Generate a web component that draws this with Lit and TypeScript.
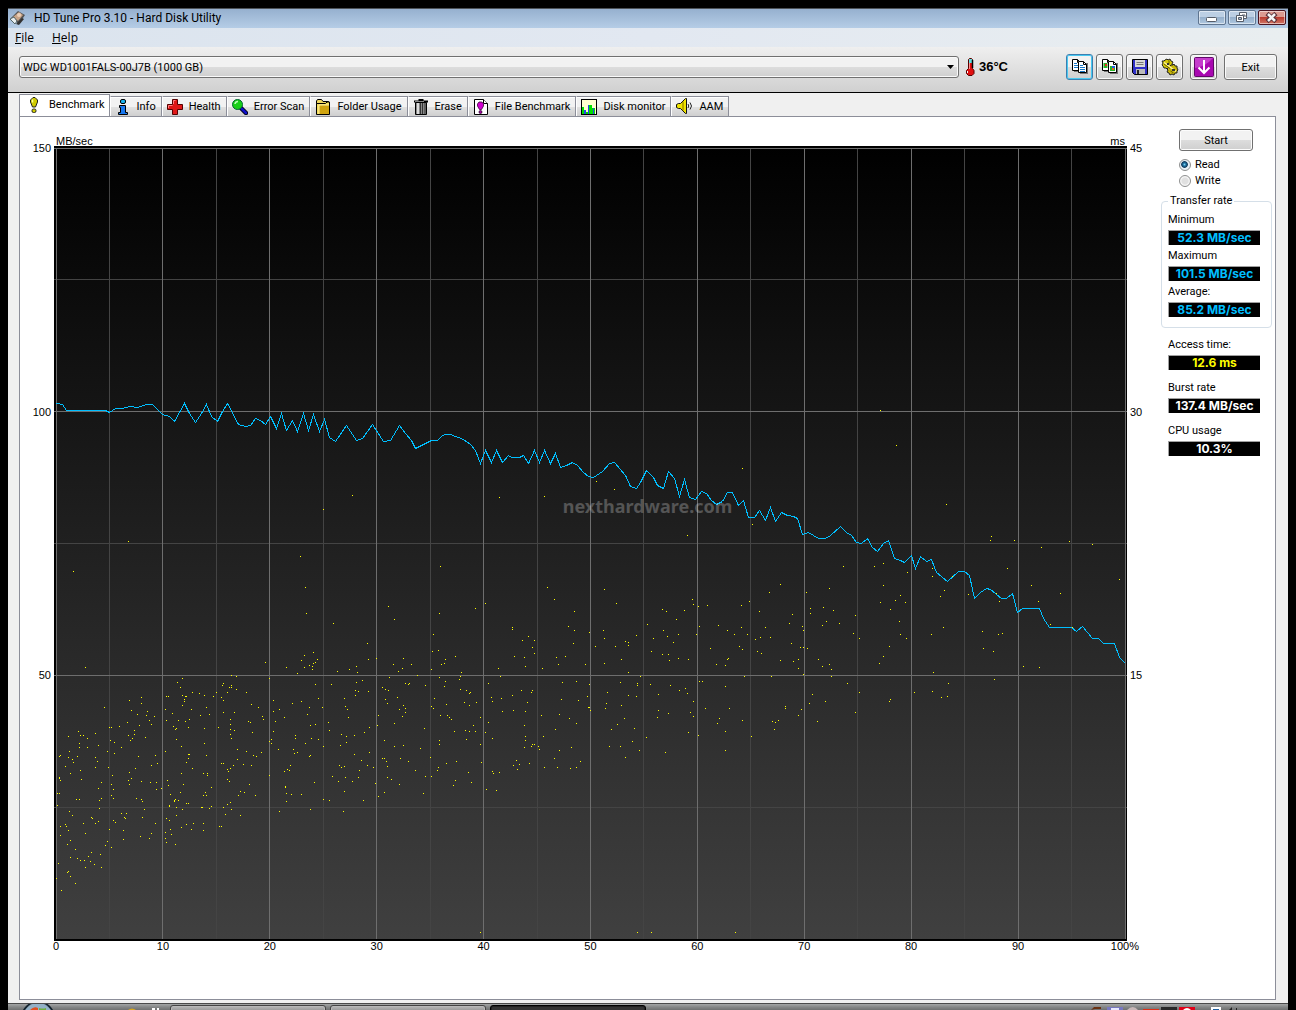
import { LitElement, html, svg, css, nothing } from "lit";
import { customElement, state } from "lit/decorators.js";
import { classMap } from "lit/directives/class-map.js";

/* ------------------------------------------------------------------ data */

type Block = { x: number; y: number; points: string };

// Samples are packed per block: an origin plus offsets in thirds of a unit.
const unpack = (blocks: Block[]): [number, number][] =>
  blocks.flatMap(({ x, y, points }) =>
    points
      .trim()
      .split(/\s+/)
      .map((pair) => {
        const [dx, dy] = pair.split(",").map(Number);
        return [x + Math.floor(dx / 3), y + Math.floor(dy / 3)] as [number, number];
      })
  );

const TRANSFER = unpack([
  {
    x: 40,
    y: 380,
    points: `48,70 66,74 80,91 197,91 208,97 225,86 245,86 272,79 292,82 318,73 338,73 368,104 387,110 404,124
      433,70 447,100 467,127 485,100 500,73 515,110 532,123 547,95 563,70 595,132 615,139 630,135 645,115 660,120
      677,133 692,110 710,146 725,100 740,151 757,121 773,154 790,100 806,151 821,103 838,154 854,119 869,172
      887,184 920,136 950,181 968,175 997,133 1031,184 1050,180 1078,136 1096,161 1113,180 1126,205 1175,181 1193,181`,
  },
  {
    x: 420,
    y: 380,
    points: `68,167 75,163 92,163 130,178 152,192 166,212 182,250 197,211 215,247 230,211
      246,247 264,226 275,232 298,232 310,226 326,250 344,211 359,247 374,211 392,250 407,220 422,262 440,256
      457,247 473,257 490,278 505,290 520,292 548,274 568,250 584,247 615,287 630,318 649,325 662,308 680,271
      700,293 713,316 731,325 746,274 762,294 779,349 794,298 808,351 827,358 843,334 858,340 875,360 890,373
      907,363 922,337 938,337 956,376 971,361 986,412 1004,412 1019,391`,
  },
  {
    x: 760,
    y: 380,
    points: `17,421 32,382 47,424 65,398 83,406 100,410 113,416 128,464 145,457 160,467 175,475 195,475 210,467
      241,439 260,458 275,466 290,488 304,490 323,475 337,502 353,514 370,490 386,482 403,535 420,540 434,547
      453,526 467,566 482,530 500,544 515,538 530,578 563,604 595,574 612,574 628,586 644,656 662,638 680,625
      692,628 725,655 740,655 758,641 772,697 788,685 838,685 850,715 868,742 935,742 949,753 968,739 997,775
      1016,775 1031,790 1063,790 1078,832 1097,850`,
  },
]);

const ACCESS = unpack([
  { x: 40, y: 380, points: `937,346 850,388 265,484 100,574 781,529 796,622 799,700` },
  {
    x: 420,
    y: 380,
    points: `61,559 382,622 403,658 529,304 583,328 238,352 373,349 553,628 802,466 817,658 967,265 997,433 1048,637`,
  },
  {
    x: 760,
    y: 380,
    points: `361,91 409,196 559,373 694,469 691,481 763,481 844,502 928,484 997,493 370,550 343,559 250,559
      442,577 517,565 517,589 577,589 742,565 814,616 1078,598 901,640 709,640 835,664 718,664 871,733 937,742
      715,763 727,760 700,814 703,898 790,859 838,862 61,613 28,637 139,637 208,625 370,616 553,631 541,649
      625,643 421,646`,
  },
  {
    x: 40,
    y: 640,
    points: `136,82 676,67 739,82 772,100 784,61 793,46 793,82 808,76 817,79 820,70 817,88 820,37 826,67 832,58
      193,202 268,181 304,172 304,190 274,211 292,223 322,214 319,226 343,229 328,241 334,253 262,247 298,256
      238,259 208,262 214,262 283,271 283,283 265,286 277,295 271,301 316,292 211,301 223,307 244,322 223,340
      295,349 346,346 352,370 334,376 286,385 268,397 205,382 202,334 172,364 166,352 166,382 175,316 142,322
      166,280 142,295 130,286 121,286 115,274 85,289 118,310 118,322 88,334 112,349 85,352 97,358 100,367 76,379
      58,349 61,346 91,400 121,391 124,418 58,412 58,415 61,421 52,460 58,460 52,496 109,478 118,478 88,514
      97,526 61,559 61,586 76,553 79,559 85,571 91,601 82,613 106,628 91,652 112,655 121,661 133,661 145,649
      154,637 151,664 163,673 181,643 136,682 184,682 55,670 49,715 82,697 85,694 91,709 106,730 64,751 136,580
      130,550 154,532 157,535 166,550 175,544 178,505 178,481 184,475 175,445 184,427 217,406 214,433 220,448
      214,466 220,475 274,415 265,421 268,433 304,424 331,427 349,427 349,448 364,445 289,475 304,478 307,484
      313,508 307,532 346,550 334,580 328,595 301,589 250,598 250,571 259,520 244,520 253,532 256,535 220,541
      226,547 208,568 202,604 196,616 214,622 427,115 412,127 421,142 427,166 436,169 439,169 433,178 433,184
      427,196 379,169 385,169 457,157 478,160 493,166 529,157 520,169 499,202 454,208 376,208 397,220 481,226
      508,223 448,238 436,244 415,241 379,241 400,259 409,265 406,268 445,262 493,265 535,262 409,298 424,319
      493,310 376,334 445,343 448,343 445,355 439,367 499,346 457,385 424,400 490,400 502,400 502,406 382,421
      385,436 430,433 514,442 421,457 391,463 496,457 490,466 499,466 406,478 403,481 403,484 415,481 388,496
      388,499 409,502 439,490 445,490 427,508 484,502 487,502 508,505 514,499 379,535 388,541 409,526 439,553
      460,550 490,550 424,562 454,568 490,571 391,568 376,577 394,583 376,595 379,607 406,613 574,106 589,109
      550,130 547,136 574,136 568,142 574,142 589,148 562,157 619,157 544,172 550,181 550,217 583,217 634,193
      655,202 688,115 571,238 571,253 571,268 571,283 583,271 574,295 625,244 631,247 667,229 670,238 637,277
      592,328 619,334 640,346 649,349 664,337 592,358 544,370 550,370 580,376 571,385 562,388 565,394 610,373
      634,376 562,418 568,424 628,433 688,406 601,454 613,457 595,466 646,466 562,493 571,487 550,502 574,508
      556,523 601,526 538,559 544,559 700,181 700,214 718,208 706,244 733,232 757,190 784,184 808,202 802,223
      826,133 835,175 847,202 826,253 811,256 700,274 694,298 688,304 694,310 715,328 766,286 766,295 796,310
      814,295 835,298 850,319 760,328 763,340 772,337 808,349 811,346 751,376 742,388 748,391 733,394 823,427
      736,439 736,442 739,460 754,463 784,463 739,484 811,508 850,478 868,481 718,514 865,247 868,271`,
  },
  {
    x: 330,
    y: 600,
    points: `10,70 112,130 115,178 79,199 58,208 22,214 82,217 97,241 79,247 4,253 76,271 85,274 76,286 115,274
      43,295 46,319 52,328 55,352 118,382 103,397 34,403 49,409 73,406 49,427 31,436 118,457 73,463 94,481 28,496
      34,502 43,499 112,496 130,502 88,511 7,529 46,532 85,532 25,544 67,544 136,550 43,574 100,601 40,634
      175,19 193,58 139,175 220,175 190,193 244,193 217,205 205,214 262,226 178,232 226,250 235,253 238,250
      286,256 157,262 166,268 175,271 202,292 166,298 172,310 220,316 226,325 208,328 226,337 217,349 145,346
      193,370 142,376 283,385 163,421 193,439 220,436 271,445 157,475 163,475 169,484 211,475 235,484 172,499
      256,511 172,532 184,538 286,529 208,553 163,577 280,580 145,589 436,25 466,10 328,40 310,103 307,154
      325,151 376,169 346,178 343,190 334,193 304,208 394,217 391,229 388,238 328,232 346,244 343,259 391,268
      409,271 421,277 418,280 313,295 403,307 439,307 349,313 418,316 304,319 310,325 331,346 352,346 358,352
      364,358 451,352 430,376 373,394 406,391 418,394 436,394 409,418 328,421 328,433 451,433 301,472 349,490
      379,484 454,487 325,502 322,511 415,517 304,529 376,541 424,547 370,556 547,82 547,88 595,109 577,121
      613,121 607,142 613,160 553,169 583,172 586,199 505,205 511,229 475,250 574,271 607,271 604,277 547,286
      484,292 514,295 487,304 592,307 517,334 550,331 586,334 475,367 583,376 466,397 586,409 487,415 586,421
      583,442 604,439 607,433 613,433 625,439 628,448 559,481 550,496 568,493 598,490 562,508 487,514 490,520
      508,517 469,568 499,571 733,34 715,79 733,91 778,97 730,130 679,172 706,169 685,193 766,193 637,205
      697,247 739,244 778,253 772,289 694,298 745,301 775,322 778,322 781,331 634,346 688,343 718,355 739,370
      676,388 640,409 724,442 688,451 673,475 751,484 643,502 682,502 721,505 739,502 859,10 820,91 823,115
      919,106 796,139 856,139 886,124 895,127 895,136 874,178 823,190 895,217 931,229 871,247 922,250 922,256
      832,277 895,286 919,289 829,310 826,325 874,316 883,355 862,373 844,388 913,385 907,424 838,439 871,439
      928,451 886,472 997,28 1009,34 1063,31 1039,58 952,73 1000,91 1012,109 1045,103 970,115 1030,127 964,154
      997,163 1015,163 1018,181 1045,175 1075,178 961,253 1021,256 1048,271 1066,265 1072,280 985,283 985,331
      1015,340 982,352 949,412 1075,397 1006,457 451,997 922,997 964,997 1216,997`,
  },
  {
    x: 690,
    y: 600,
    points: `10,13 25,19 52,16 154,16 178,4 28,79 85,76 154,82 112,91 19,103 133,103 172,103 61,145 148,139
      157,148 112,178 115,175 79,193 106,196 163,229 28,244 37,244 106,259 10,304 1,337 10,349 46,325 118,325
      88,355 157,361 82,370 106,394 25,406 106,451 208,34 307,43 298,70 226,82 337,79 340,91 211,112 241,112
      196,118 304,130 331,142 340,142 202,154 214,160 271,181 310,184 325,178 325,205 340,223 244,229 286,319
      286,325 334,328 325,346 247,364 256,367 265,361 253,388 184,409 361,25 361,40 400,22 430,31 496,46 409,64
      397,76 448,70 490,100 352,145 385,178 397,199 418,193 424,208 424,229 472,250 367,283 358,310 406,304
      496,337 382,364 571,7 616,1 646,7 601,28 628,64 631,103 649,115 508,115 598,139 580,169 568,190 508,277
      601,298 598,304 760,82 724,103 877,94 880,145 730,217 673,277 727,274 775,250 754,292 772,289`,
  },
]);

const MAJOR_X = [56, 162, 269, 376, 483, 590, 697, 804, 911, 1018, 1125];
const MINOR_X = [109, 216, 323, 430, 537, 643, 750, 857, 964, 1071];
const MAJOR_Y = [148, 411, 675];
const MINOR_Y = [279, 543, 807];
const SPEED_AXIS = ["150", "100", "50", ""];
const TIME_AXIS = ["45", "30", "15", ""];
const POSITION_AXIS = ["0", "10", "20", "30", "40", "50", "60", "70", "80", "90", "100%"];

/* ----------------------------------------------------------------- icons */

const icon = (size: number, body: unknown) =>
  html`<svg width=${size} height=${size} viewBox="0 0 ${size} ${size}" aria-hidden="true">${body}</svg>`;

const bang = icon(16, svg`
  <path d="M7 0.500h2l2.500 2.500v2l-2 5h-3l-2-5v-2z" fill="#d0cc00" stroke="#222" />
  <path d="M6.500 2.500v3" stroke="#ffffa0" stroke-width="1.500" />
  <rect x="6" y="12" width="4" height="3.500" rx="1.500" fill="#d0cc00" stroke="#222" />`);

const info = icon(16, svg`
  <rect x="5.500" y="0.500" width="5" height="4" rx="1.500" fill="#19b4f0" stroke="#000" />
  <path d="M4.500 6.500h6v7h2v2h-9v-2h2v-5h-1z" fill="#1878f0" stroke="#000" />`);

const health = icon(16, svg`
  <path d="M5.500 0.500h5v5h5v5h-5v5h-5v-5h-5v-5h5z" fill="#e01818" stroke="#500" />
  <path d="M6.500 5v-3.500h2M1.500 9v-2.500h4" fill="none" stroke="#ff8080" />`);

const scan = icon(16, svg`
  <path d="M9 9l5 5" stroke="#001" stroke-width="4.500" stroke-linecap="round" />
  <path d="M9.500 9.500l4.500 4.500" stroke="#1010c8" stroke-width="2.500" stroke-linecap="round" />
  <circle cx="5.500" cy="5.500" r="5" fill="#18d018" stroke="#063" />
  <path d="M3 5a3 3 0 0 1 3-2.500" fill="none" stroke="#b8ffb8" stroke-width="1.500" />`);

const folder = icon(16, svg`
  <path d="M1.500 14v-12l1-1.500h4l1.500 2h5.500v2" fill="#f0d860" stroke="#000" />
  <path d="M1.500 15.500v-11h9l1.500-1.500h2.500v12.500z" fill="#f4dc58" stroke="#000" />
  <rect x="4" y="6" width="10" height="9" fill="#d0a410" />
  <path d="M4 15v-9h10" stroke="#fff0a0" fill="none" />`);

const trash = icon(16, svg`
  <path d="M2.500 3.500h11v12h-11z" fill="#888" stroke="#000" />
  <path d="M5 4v11" stroke="#ddd" stroke-width="2" />
  <path d="M7.500 4v11M9.500 4v11M12 4v11" stroke="#333" />
  <path d="M1 2.500h14M5.500 1h5" stroke="#000" stroke-width="2" /><path d="M2 2.500h9" stroke="#888" />`);

const fileBench = icon(16, svg`
  <path d="M1.500 0.500h9l4 4v11h-13z" fill="#fff" stroke="#000" /><path d="M10.500 0.500v4h4" fill="#fff" stroke="#000" />
  <path d="M6 3h3l1.500 2v2l-2 3.500h-2l-2-3.500v-2z" fill="#d000d0" stroke="#400040" stroke-width="0.800" />
  <circle cx="7.500" cy="13" r="1.500" fill="#a000a0" stroke="#300030" stroke-width="0.800" />`);

const monitor = icon(16, svg`
  <rect x="0.500" y="0.500" width="15" height="15" fill="#ffffd0" stroke="#000" />
  <path d="M1 8h2v4h2v1h2v-7h4v3h3v6h-13z" fill="#00e000" />
  <path d="M3 15v-4h2v4zM7 15v-9h1v9zM12 15v-6h1v6z" fill="#2848e8" />`);

const speaker = icon(17, svg`
  <path d="M0.500 6.500l2-1h2l5-5h1v15h-1l-5-5h-2l-2-1z" fill="#f0e400" stroke="#111" />
  <path d="M7 3.500v9" stroke="#806800" />
  <path d="M12 6q1.500 2 0 4M14 4.500q3 3.500 0 7" fill="none" stroke="#222" />`);

const appIcon = icon(16, svg`
  <path d="M1 8l7-7 7 4-6 9z" fill="#555" /><path d="M3 7l6-5 4 3-5 6z" fill="#c8a488" />
  <path d="M0 9l4-2 3 4-2 3z" fill="#e8eef0" stroke="#566" /><path d="M6 14l6-6 2 1-5 6z" fill="#333" />
  <circle cx="9" cy="5" r="2" fill="#ecd0b8" />`);

const thermometer = html`<svg width="10" height="18" viewBox="0 0 10 18" aria-hidden="true">
  <path d="M3.500 1.500l1-1h2l1 1v9l1.500 2v3l-2 2h-3.500l-2-2v-3l2-2z" fill="#e01010" stroke="#500" />
  <path d="M4 1h3v4h-3z" fill="#60e0e0" /><path d="M4.500 5v6" stroke="#ff9090" />
  <path d="M7.500 2v8" stroke="#000" stroke-width="1.500" />
  <path d="M2.500 13v2" stroke="#fff" />
</svg>`;

const page = (x: number, y: number) => svg`
  <path d="M${x + 2} ${y + 2}h8v11h-8z" fill="#777" />
  <path d="M${x}.5 ${y}.5h5l3 3v8h-8z" fill="#fff" stroke="#000" />
  <path d="M${x + 5}.5 ${y}.5v3h3" fill="none" stroke="#000" />`;

const copyText = icon(18, svg`
  ${page(1, 1)}<path d="M3 5.500h3M3 7.500h4M3 9.500h4" stroke="#1878c8" />
  ${page(7, 3)}<path d="M9 7.500h3M9 9.500h5M9 11.500h5M9 13.500h5" stroke="#1878c8" />`);

const copyImage = icon(18, svg`
  ${page(1, 1)}<path d="M2.500 5h4v5h-4z" fill="#28b428" /><path d="M4 6h2v2h-2z" fill="#e03020" />
  ${page(7, 3)}<path d="M9 8h5v5h-5z" fill="#28b428" /><path d="M11 8h3v2h-3z" fill="#2060e0" /><path d="M11 10h2v2h-2z" fill="#f06020" />`);

const save = icon(18, svg`
  <path d="M1.500 1.500h15v15h-13l-2-2z" fill="#3030c8" stroke="#000" />
  <path d="M4 2h10v7h-10z" fill="#d8d8d8" /><path d="M5.500 4.500h7M5.500 6.500h7" stroke="#777" />
  <path d="M5 11h9v5h-9z" fill="#bbb" /><path d="M6 12h2v4h-2z" fill="#222" />`);

const gears = icon(18, svg`
  <path d="M4 2l2-1 1 1 2-1 1 2 2 1-1 2 1 2-2 1v2l-2 0-1 1-2-2-2 0-1-2-1-1 1-2-1-2 2 0z" fill="#d4c808" stroke="#222" />
  <path d="M10 7l2 0 1-1 1 2 2 0 0 2 1 2-1 1 0 2-2 0-1 2-2-1-2 1-1-2-2-1 1-2-1-1 2-2z" fill="#c8b808" stroke="#222" />
  <path d="M3 4.500l12 9" stroke="#fff4a0" stroke-width="1.500" />
  <path d="M3 6l6 4.500M8 2.500v4M9.500 13l3 2" stroke="#6a5e00" />
  <path d="M6 5h2v2h-2zM11 11h3v2h-3z" fill="#333" />`);

const download = icon(20, svg`
  <rect x="0.500" y="0.500" width="19" height="19" rx="1" fill="#a808b0" stroke="#600868" />
  <path d="M1 1h18q-8 9-18 10z" fill="#d860e0" opacity="0.600" />
  <path d="M10 3v13M4.500 10.500l5.500 5.500 5.500-5.500" fill="none" stroke="#fff" stroke-width="2" />`);

const minimizeGlyph = html`<svg width="26" height="13" viewBox="0 0 26 13" aria-hidden="true">
  <rect x="7.500" y="6.500" width="10" height="4" rx="1" fill="#fff" stroke="#555c68" /></svg>`;
const restoreGlyph = html`<svg width="26" height="13" viewBox="0 0 26 13" aria-hidden="true">
  <path d="M10.500 1.500h7v6h-7z" fill="#fff" stroke="#555c68" /><path d="M13 4h3v2" fill="none" stroke="#555c68" />
  <path d="M7.500 4.500h7v6h-7z" fill="#fff" stroke="#555c68" /><path d="M9.500 6.500h3v2h-3z" fill="#a8bfd8" stroke="#555c68" /></svg>`;
const closeGlyph = html`<svg width="26" height="13" viewBox="0 0 26 13" aria-hidden="true">
  <path d="M8 2.500l9 8M17 2.500l-9 8" stroke="#5a3038" stroke-width="4.500" />
  <path d="M9 3l7 7M16 3l-7 7" stroke="#f4f4f4" stroke-width="2.500" /></svg>`;

const TABS: { name: string; glyph: unknown }[] = [
  { name: "Benchmark", glyph: bang },
  { name: "Info", glyph: info },
  { name: "Health", glyph: health },
  { name: "Error Scan", glyph: scan },
  { name: "Folder Usage", glyph: folder },
  { name: "Erase", glyph: trash },
  { name: "File Benchmark", glyph: fileBench },
  { name: "Disk monitor", glyph: monitor },
  { name: "AAM", glyph: speaker },
];

/* ----------------------------------------------------------------- chart */

@customElement("benchmark-chart")
export class BenchmarkChart extends LitElement {
  static styles = css`
    :host {
      display: grid;
      grid-template-columns: 34px minmax(0, 1fr) 34px;
      grid-template-rows: 29px minmax(0, 1fr) 58px;
      font: 11px/14px "Liberation Sans", Arial, sans-serif;
      color: #000;
    }
    .units {
      grid-column: 2;
      display: flex;
      justify-content: space-between;
      align-items: flex-end;
      padding: 0 2px;
      margin-bottom: -2px;
      z-index: 1;
    }
    .scale {
      grid-row: 2;
      display: flex;
      flex-direction: column;
      justify-content: space-between;
      margin: -5px 3px;
    }
    .scale span {
      height: 14px;
    }
    .speed {
      grid-column: 1;
      text-align: right;
    }
    .time {
      grid-column: 3;
    }
    .plot {
      grid-column: 2;
      grid-row: 2;
      position: relative;
      background: linear-gradient(#000, #404040);
    }
    .drawing {
      position: absolute;
      inset: 0;
      width: 100%;
      height: 100%;
      shape-rendering: crispEdges;
    }
    .minor,
    .major,
    .transfer {
      fill: none;
      vector-effect: non-scaling-stroke;
    }
    .minor {
      stroke: #444;
    }
    .major {
      stroke: #6e6e6e;
    }
    .edge {
      fill: #000;
    }
    .transfer {
      stroke: #00bfff;
    }
    .access {
      fill: #ff0;
    }
    .watermark {
      position: absolute;
      left: 0;
      right: 0;
      top: 44%;
      padding-left: 114px;
      text-align: center;
      font: bold 18px/20px "Noto Sans", "Open Sans", sans-serif;
      color: rgb(255 255 255 / 25%);
    }
    .positions {
      grid-column: 2;
      grid-row: 3;
      display: flex;
      justify-content: space-between;
      margin: -2px -18px 0;
    }
    .positions span {
      width: 40px;
      text-align: center;
    }
  `;

  render() {
    const vertical = (xs: number[]) => xs.map((x) => `M${x}.5 148V941`).join("");
    const horizontal = (ys: number[]) => ys.map((y) => `M54 ${y}.5H1127`).join("");
    const transfer = "M" + TRANSFER.map(([x, y]) => `${x + 0.5} ${y + 0.5}`).join("L");
    const access = ACCESS.map(([x, y]) => `M${x} ${y}h1v1h-1z`).join("");
    return html`
      <div class="units"><span>MB/sec</span><span>ms</span></div>
      <div class="scale speed">${SPEED_AXIS.map((t) => html`<span>${t}</span>`)}</div>
      <div class="plot">
        <svg class="drawing" viewBox="54 146 1073 795" preserveAspectRatio="none" role="img"
          aria-label="Transfer rate and access time">
          <path class="edge" d="M54 146h1073v795h-1073zM56 148v791h1070v-791z" fill-rule="evenodd" />
          <path class="minor" d=${vertical(MINOR_X) + horizontal(MINOR_Y)} />
          <path class="major" d=${vertical(MAJOR_X) + horizontal(MAJOR_Y)} />
          <path class="edge" d="M56 939h1070v2h-1070z" />
          <path class="transfer" d=${transfer} />
          <path class="access" d=${access} />
        </svg>
        <div class="watermark">nexthardware.com</div>
      </div>
      <div class="scale time">${TIME_AXIS.map((t) => html`<span>${t}</span>`)}</div>
      <div class="positions">${POSITION_AXIS.map((t) => html`<span>${t}</span>`)}</div>
    `;
  }
}

/* ---------------------------------------------------------- result panel */

@customElement("result-panel")
export class ResultPanel extends LitElement {
  static styles = css`
    :host {
      display: block;
      box-sizing: border-box;
      padding-top: 12px;
      font: 11px/14px Roboto, "Liberation Sans", sans-serif;
      color: #000;
    }
    .start {
      display: block;
      width: 74px;
      height: 22px;
      margin: 0 0 6px 18px;
      padding: 1px 0 0;
      font: inherit;
      border: 1px solid #707070;
      border-radius: 3px;
      box-shadow: inset 0 0 0 1px #fcfcfc;
      background: linear-gradient(#f2f2f2 50%, #dddddd 50%, #cfcfcf);
    }
    .choice {
      display: flex;
      align-items: center;
      gap: 4px;
      height: 16px;
      margin-left: 18px;
      line-height: 16px;
    }
    .choice input {
      appearance: none;
      width: 12px;
      height: 12px;
      margin: 0;
      border: 1px solid #8e8f8f;
      border-radius: 50%;
      background: radial-gradient(#e0e0e0 40%, #f6f6f6 60%);
    }
    .choice input:checked {
      background: radial-gradient(circle at 45% 45%, #7fd0f0 0, #1a6fa0 20%, #123a5c 38%, #e8f0f6 48%);
    }
    .group {
      margin: 5px 0 9px;
      padding: 4px 0 7px 6px;
      min-width: 0;
      border: 1px solid #d5dfe8;
      border-radius: 4px;
    }
    .group legend {
      padding: 0 2px;
    }
    .results {
      margin: 0;
    }
    .loose {
      padding-left: 7px;
    }
    .label {
      height: 18px;
      line-height: 16px;
    }
    .value {
      box-sizing: border-box;
      width: 92px;
      height: 15px;
      margin: 0 0 3px;
      border: solid #a0a0a0;
      border-width: 1px 0 0 1px;
      background: #000;
      color: #fff;
      font: bold 12px/14px Inter, "Liberation Sans", sans-serif;
      text-align: center;
    }
    .loose .value {
      margin-bottom: 10px;
    }
    .value.rate {
      color: #00bfff;
    }
    .value.delay {
      color: #ff0;
    }
  `;

  private entry(label: string, value: string, tone = "") {
    return html`<dt class="label">${label}</dt><dd class="value ${tone}">${value}</dd>`;
  }

  render() {
    return html`
      <button class="start" type="button">Start</button>
      <label class="choice"><input type="radio" name="mode" checked />Read</label>
      <label class="choice"><input type="radio" name="mode" />Write</label>
      <fieldset class="group">
        <legend>Transfer rate</legend>
        <dl class="results">
          ${this.entry("Minimum", "52.3 MB/sec", "rate")} ${this.entry("Maximum", "101.5 MB/sec", "rate")}
          ${this.entry("Average:", "85.2 MB/sec", "rate")}
        </dl>
      </fieldset>
      <dl class="results loose">
        ${this.entry("Access time:", "12.6 ms", "delay")} ${this.entry("Burst rate", "137.4 MB/sec")}
        ${this.entry("CPU usage", "10.3%")}
      </dl>
    `;
  }
}

/* --------------------------------------------------------------- taskbar */

@customElement("task-bar")
export class TaskBar extends LitElement {
  static styles = css`
    :host {
      display: flex;
      height: 6px;
      overflow: hidden;
      border-top: 1px solid #4a4a4a;
      background: linear-gradient(#a4a6a6, #858787 3px, #6f7171);
    }
    .orb {
      flex: none;
      margin-left: 12px;
    }
    .quick {
      width: 114px;
      flex: none;
    }
    .task {
      box-sizing: border-box;
      flex: none;
      width: 156px;
      height: 30px;
      margin: 1px 4px 0 0;
      padding: 0;
      border: 1px solid #444;
      border-radius: 3px;
      background: linear-gradient(#b8b8b8, #8e8e8e 6px);
      box-shadow: inset 0 0 0 1px #b8b8b8;
    }
    .current {
      border-color: #000;
      background: #333;
      box-shadow: inset 0 0 0 1px #222;
    }
    .tray {
      margin-left: auto;
      margin-right: 40px;
      flex: none;
    }
  `;

  render() {
    return html`
      <svg class="orb" width="36" height="6" viewBox="0 1 36 6" aria-hidden="true">
        <circle cx="18" cy="15" r="16" fill="#6f93ac" stroke="#14232e" stroke-width="2" />
        <path d="M5 7a15 15 0 0 1 26 0z" fill="#b8cfdf" opacity="0.500" />
        <path d="M10 7q4-4 8-2v2z" fill="#e05020" /><path d="M19 5q4 1 7 0v2h-7z" fill="#70b040" />
      </svg>
      <svg class="quick" width="114" height="6" viewBox="0 1 114 6" aria-hidden="true">
        <path d="M72 7q4-3 8 0z" fill="#d8a820" /><path d="M96 7v-2h3v2zM101 7v-2h2v2z" fill="#fff" />
      </svg>
      <button class="task" type="button" aria-label="Window 1"></button>
      <button class="task" type="button" aria-label="Window 2"></button>
      <button class="task current" type="button" aria-label="HD Tune Pro"></button>
      <svg class="tray" width="158" height="6" viewBox="0 1 158 6" aria-hidden="true">
        <path d="M1 7l3-3h7v2h-6z" fill="#6a3010" />
        <path d="M17 4h16v3h-16z" fill="#7878c0" /><path d="M21 5h8v2h-8z" fill="#e8e8ff" />
        <path d="M37 7q6-6 11 0z" fill="#c8b8b8" /><path d="M53 6h16v1h-16z" fill="#e03018" />
        <path d="M71 4h16v3h-16z" fill="#282828" /><path d="M89 4h16v3h-16z" fill="#e00018" />
        <path d="M93 7q4-4 8 0z" fill="#fff" /><path d="M121 4h10v3h-10z" fill="#fff" />
        <path d="M123 6h6v1h-6z" fill="#2060a0" /><path d="M139 7l3-3v3zM146 5h1v2h-1z" fill="#222" />
      </svg>
    `;
  }
}

/* ---------------------------------------------------------------- window */

@customElement("app-root")
export class AppRoot extends LitElement {
  @state() private tab = "Benchmark";

  static styles = css`
    :host {
      display: flex;
      flex-direction: column;
      box-sizing: border-box;
      min-height: 100vh;
      padding: 8px 8px 0;
      background: #000;
      color: #000;
      font: 11px/14px Roboto, "Liberation Sans", sans-serif;
    }
    svg {
      display: block;
      flex: none;
    }
    button {
      font: inherit;
      color: inherit;
      padding: 0;
      margin: 0;
    }
    .titlebar {
      display: flex;
      align-items: flex-start;
      box-sizing: border-box;
      height: 20px;
      padding: 1px 2px 0;
      border-top: 1px solid #4c5258;
      background: linear-gradient(#96b0cf, #b5cde6);
    }
    .title {
      flex: 1;
      margin: 0 0 0 8px;
      font: 12px/16px Roboto, "Noto Sans", sans-serif;
    }
    .controls {
      display: flex;
      gap: 2px;
    }
    .control {
      box-sizing: border-box;
      width: 28px;
      height: 15px;
      border: 1px solid #5f7590;
      border-radius: 2px;
      box-shadow: inset 0 0 0 1px rgb(255 255 255 / 50%);
      background: linear-gradient(#bccfe4 50%, #96b0cc 50%, #b0c8e0);
    }
    .close {
      border-color: #4c1420;
      background: linear-gradient(#dc9a90 50%, #bc3c30 50%, #d07868);
    }
    .menu {
      display: flex;
      gap: 18px;
      height: 19px;
      padding-left: 7px;
      background: linear-gradient(90deg, #dbe4ee, #e2e8f1 50%, #e9eef0);
    }
    .menu button {
      border: 0;
      background: none;
      font: 12px/19px "Open Sans", "Noto Sans", sans-serif;
    }
    .toolbar {
      display: flex;
      align-items: center;
      height: 46px;
      box-sizing: border-box;
      padding: 0 11px 5px;
      border-bottom: 1px solid #000;
      background: linear-gradient(#efefef, #d0d0d0);
    }
    .drive {
      position: relative;
      flex: 1;
      display: flex;
    }
    .drive select {
      appearance: none;
      width: 100%;
      height: 22px;
      padding: 1px 3px 0;
      border: 1px solid #707070;
      border-radius: 3px;
      box-shadow: inset 0 0 0 1px #fafafa;
      background: linear-gradient(#f2f2f2 50%, #dddddd 50%, #cfcfcf);
      font: inherit;
      color: inherit;
    }
    .drive svg {
      position: absolute;
      right: 5px;
      top: 9px;
      pointer-events: none;
    }
    .heat {
      display: flex;
      align-items: center;
      gap: 4px;
      margin: 0 58px 0 6px;
      font: bold 13px/16px "Liberation Sans", Arial, sans-serif;
    }
    .tools {
      display: flex;
      gap: 3px;
      margin-right: 7px;
    }
    .tool {
      display: grid;
      place-items: center;
      box-sizing: border-box;
      width: 27px;
      height: 26px;
      border: 1px solid #707070;
      border-radius: 3px;
      box-shadow: inset 0 0 0 1px #fafafa;
      background: linear-gradient(#f2f2f2 50%, #dddddd 50%, #cfcfcf);
    }
    .focused {
      border-color: #3c7fb1;
      box-shadow: inset 0 0 0 1px #48c8f0;
    }
    .exit {
      width: 53px;
      padding-top: 1px;
    }
    .body {
      flex: 1;
      display: flex;
      flex-direction: column;
      padding: 1px 12px 3px 11px;
      background: #f0f0f0;
    }
    .tabs {
      display: flex;
      align-items: flex-end;
      height: 23px;
      margin-bottom: -1px;
    }
    .tab {
      display: flex;
      align-items: center;
      gap: 6px;
      box-sizing: border-box;
      height: 21px;
      padding: 0 5px 0 4px;
      border: 1px solid #8c8e99;
      border-left-color: #fff;
      box-shadow: inset 0 1px #fff;
      background: linear-gradient(#f2f2f2 50%, #e2e2e2 50%, #cfcfcf);
    }
    .tab span {
      padding-top: 1px;
    }
    .selected {
      height: 23px;
      padding: 0 4px 2px 6px;
      gap: 7px;
      border-left-color: #8c8e99;
      border-bottom-color: #fff;
      background: #fff;
    }
    .page {
      flex: 1;
      display: flex;
      border: 1px solid #8c8e99;
      padding-right: 3px;
      background: #fff;
    }
    .chart {
      flex: 1;
      min-width: 0;
    }
    .panel {
      flex: none;
      width: 111px;
    }
  `;

  private renderTool(label: string, glyph: unknown, focused = false) {
    return html`<button class=${classMap({ tool: true, focused })} type="button" aria-label=${label}>${glyph}</button>`;
  }

  render() {
    return html`
      <header class="titlebar">
        ${appIcon}
        <h1 class="title">HD Tune Pro 3.10 - Hard Disk Utility</h1>
        <div class="controls">
          <button class="control" type="button" aria-label="Minimize">${minimizeGlyph}</button>
          <button class="control" type="button" aria-label="Restore">${restoreGlyph}</button>
          <button class="control close" type="button" aria-label="Close">${closeGlyph}</button>
        </div>
      </header>
      <nav class="menu">
        <button type="button"><u>F</u>ile</button>
        <button type="button"><u>H</u>elp</button>
      </nav>
      <div class="toolbar">
        <div class="drive">
          <select aria-label="Drive">
            <option>WDC WD1001FALS-00J7B (1000 GB)</option>
          </select>
          <svg width="7" height="4" viewBox="0 0 7 4" aria-hidden="true"><path d="M0 0h7l-3.500 4z" /></svg>
        </div>
        <div class="heat">${thermometer}<span>36°C</span></div>
        <div class="tools">
          ${this.renderTool("Copy text", copyText, true)} ${this.renderTool("Copy screenshot", copyImage)}
          ${this.renderTool("Save screenshot", save)} ${this.renderTool("Options", gears)}
        </div>
        <div class="tools">${this.renderTool("Minimize to tray", download)}</div>
        <button class="tool exit" type="button">Exit</button>
      </div>
      <main class="body">
        <div class="tabs" role="tablist">
          ${TABS.map(
            ({ name, glyph }) => html`<button
              class=${classMap({ tab: true, selected: name === this.tab })}
              type="button"
              role="tab"
              aria-selected=${name === this.tab ? "true" : "false"}
              @click=${() => (this.tab = name)}
            >
              ${glyph}<span>${name}</span>
            </button>`
          )}
        </div>
        <section class="page" role="tabpanel">
          ${this.tab === "Benchmark"
            ? html`<benchmark-chart class="chart"></benchmark-chart><result-panel class="panel"></result-panel>`
            : nothing}
        </section>
      </main>
      <task-bar></task-bar>
    `;
  }
}
